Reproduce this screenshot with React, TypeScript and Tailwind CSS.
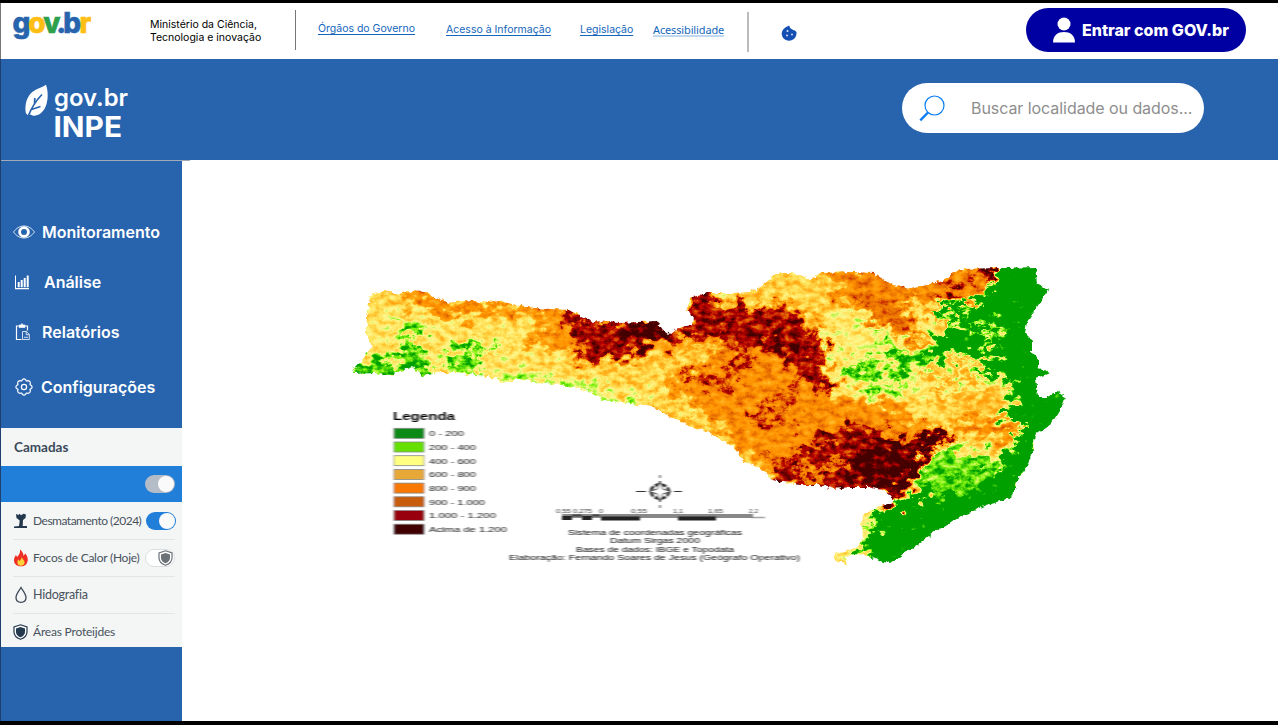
import React from "react";

const OUTLINE =
  "M377 292 L386 291 L397 295 L408 291 L425 292 L437 298 L448 303 L462 301 L482 302 L495 300 L508 303 L520 306 L535 308 L568 310 L580 315 L593 321 L620 323 L657 321 L663 330 L669 334 L675 329 L692 325 L693 318 L687 308 L690 298 L707 293 L730 293 L750 292 L763 285 L777 273 L793 273 L810 280 L820 273 L853 272 L873 273 L893 285 L910 289 L927 285 L947 278 L960 269 L997 268 L1035 267 L1037 283 L1048 290 L1037 307 L1027 322 L1025 333 L1032 340 L1032 352 L1038 358 L1038 368 L1050 373 L1036 378 L1038 397 L1047 397 L1058 392 L1065 397 L1063 405 L1050 425 L1035 435 L1033 450 L1027 467 L1017 480 L1015 490 L1010 498 L987 505 L960 517 L933 533 L907 552 L890 564 L880 561 L870 556 L860 554 L845 557 L847 565 L834 559 L836 553 L855 548 L863 540 L861 527 L862 515 L880 506 L895 502 L888 493 L882 490 L867 487 L850 487 L833 489 L820 485 L800 485 L773 480 L760 468 L743 460 L733 447 L710 433 L687 425 L663 413 L653 407 L630 404 L603 400 L585 390 L562 385 L535 382 L518 379 L502 382 L488 376 L465 374 L442 372 L423 376 L412 367 L388 376 L375 373 L353 374 L355 367 L372 347 L366 335 L367 317 L370 297 Z";

/* Elevation areas: grey level stands for height, later coloured by the palette filter. */
const RELIEF: { d: string; level: string }[] = [
  { level: "#787878", d: "M365 285 L440 290 L580 305 L600 330 L540 330 L500 318 L470 312 L445 316 L425 305 L400 304 L365 300Z" },
  { level: "#acacac", d: "M405 284 L430 286 L450 298 L520 298 L580 306 L600 340 L560 326 L520 312 L470 309 L462 322 L440 314 L424 304 L405 298Z" },
  { level: "#a8a8a8", d: "M520 345 L560 322 L640 340 L640 352 L600 352 L560 350Z" },
  { level: "#303030", d: "M398 312 L407 324 L424 324 L414 338 L418 350 L434 362 L425 370 L392 370 L402 350 Z" },
  { level: "#262626", d: "M345 380 L352 360 L364 350 L376 360 L395 364 L410 358 L434 370 L420 382Z" },
  { level: "#303030", d: "M450 345 L470 350 L490 344 L508 338 L492 352 L474 362 L484 372 L455 380 L440 368Z" },
  { level: "#4a4a4a", d: "M500 374 L530 376 L580 382 L640 402 L640 412 L500 390Z" },
  { level: "#acacac", d: "M690 340 L740 316 L800 300 L840 330 L830 395 L900 405 L945 436 L900 480 L860 500 L780 488 L740 448 L700 408 L665 384 L690 365Z" },
  { level: "#989898", d: "M600 352 L690 345 L690 375 L664 384 L640 380 L600 368Z" },
  { level: "#787878", d: "M580 354 L640 358 L690 352 L735 338 L722 350 L690 368 L665 378 L640 390 L590 380 L550 367Z" },
  { level: "#808080", d: "M640 396 L690 416 L730 440 L780 478 L760 490 L700 440 L640 415Z" },
  { level: "#e6e6e6", d: "M568 306 L590 316 L668 320 L692 322 L680 286 L710 286 L724 300 L745 306 L790 310 L822 334 L824 350 L818 368 L832 388 L812 390 L790 372 L780 354 L750 346 L744 370 L728 368 L732 346 L718 334 L694 342 L670 342 L640 354 L600 362 L568 358 L588 342 L566 334Z" },
  { level: "#ffffff", d: "M616 316 L658 316 L670 338 L650 344 L622 344 L632 332Z" },
  { level: "#f8f8f8", d: "M748 334 L780 340 L820 340 L812 348 L770 346Z" },
  { level: "#e0e0e0", d: "M672 374 L690 370 L725 376 L738 388 L712 390 L700 382Z" },
  { level: "#dcdcdc", d: "M740 408 L790 410 L796 418 L760 422Z M766 396 L800 398 L800 404 L770 404Z" },
  { level: "#787878", d: "M708 285 L780 265 L835 266 L838 312 L826 332 L806 316 L792 302 L750 302 L730 300Z" },
  { level: "#dadada", d: "M765 300 L790 306 L800 318 L776 318Z" },
  { level: "#b4b4b4", d: "M832 262 L960 260 L990 262 L985 300 L958 330 L935 350 L912 345 L885 322 L870 308 L840 306Z" },
  { level: "#c2c2c2", d: "M852 298 L885 296 L920 324 L930 348 L900 338 L872 316Z" },
  { level: "#606060", d: "M824 312 L866 310 L880 322 L910 348 L950 364 L1000 352 L1010 380 L1010 410 L998 430 L950 425 L910 404 L880 400 L840 388 L824 370Z" },
  { level: "#888888", d: "M925 368 L990 352 L1000 360 L960 374 L1014 370 L1004 388 L960 394 L1010 390 L994 416 L960 432 L935 412 L925 390Z" },
  { level: "#484848", d: "M930 374 L975 362 L990 364 L950 378Z M930 392 L1000 378 L1004 382 L950 396Z" },
  { level: "#6a6a6a", d: "M896 304 L932 304 L944 325 L930 345 L912 340 L920 322Z" },
  { level: "#292929", d: "M866 322 L890 342 L908 354 L928 350 L934 366 L912 368 L898 378 L884 372 L900 362 L890 352Z M838 366 L862 363 L884 366 L876 374 L850 374Z" },
  { level: "#303030", d: "M848 376 L870 376 L886 386 L902 380 L912 402 L898 390 L875 392Z" },
  { level: "#e8e8e8", d: "M814 442 L840 428 L878 428 L900 446 L920 452 L908 470 L895 505 L860 495 L800 492 L764 484 L785 464 L766 462 L790 455Z" },
  { level: "#a8a8a8", d: "M790 474 L830 460 L860 456 L838 466 L812 478Z" },
  { level: "#ffffff", d: "M852 456 L886 436 L905 454 L925 458 L910 480 L895 512 L882 490 L862 482 L842 474Z" },
  { level: "#ffffff", d: "M912 438 L928 430 L954 430 L944 448 L925 454 L900 446Z" },
  { level: "#747474", d: "M888 398 L930 400 L1010 425 L1030 430 L1010 470 L920 505 L850 526 L855 510 L900 500 L922 470 L940 452 L962 438 L925 424Z" },
  { level: "#b4b4b4", d: "M952 418 L985 420 L1022 428 L1012 442 L985 436 L958 430Z" },
  { level: "#313131", d: "M918 466 L940 448 L992 450 L994 478 L975 498 L930 496 L916 482Z" },
  { level: "#040404", d: "M985 255 L1060 255 L1085 410 L1040 450 L1020 510 L890 585 L862 552 L864 520 L890 505 L925 494 L960 498 L980 484 L1000 466 L1012 448 L1022 428 L1002 414 L1016 388 L1004 376 L965 372 L1006 358 L985 352 L955 356 L925 358 L938 335 L948 320 L936 300 L978 300 L988 285Z" },
  { level: "#606060", d: "M976 324 L1006 325 L1002 331 L980 330Z M982 336 L1004 338 L998 343 L978 342Z M950 320 L968 316 L966 328 L954 330Z M952 304 L962 304 L958 314Z" },
  { level: "#040404", d: "M1002 404 L1024 404 L1014 420 L1000 418Z" },
  { level: "#ffffff", d: "M980 262 L999 262 L998 279 L982 278Z" },
  { level: "#e8e8e8", d: "M944 288 L958 286 L964 300 L950 300Z M970 276 L981 276 L980 284 L970 282Z M812 376 L832 378 L832 392 L814 392Z M815 334 L824 336 L822 348 L815 348Z" },
  { level: "#606060", d: "M854 514 L874 508 L882 510 L872 516 L884 520 L870 524 L880 530 L868 534 L862 548 L830 568 L826 550 L852 545Z" },
];

const LEGEND = [
  ["#078a14", "0 - 200"],
  ["#66e000", "200 - 400"],
  ["#ffff80", "400 - 600"],
  ["#e8a838", "600 - 800"],
  ["#f87800", "800 - 900"],
  ["#c85c08", "900 - 1.000"],
  ["#980008", "1.000 - 1.200"],
  ["#400004", "Acima de 1.200"],
];

function ReliefMap() {
  return (
    <svg className="block h-[325px] w-[742px]" viewBox="338 250 742 325" fontFamily="'Liberation Sans', sans-serif">
      <defs>
        <filter id="palette" filterUnits="userSpaceOnUse" x="330" y="240" width="760" height="345" colorInterpolationFilters="sRGB">
          <feGaussianBlur in="SourceGraphic" stdDeviation="2.5" result="soft" />
          <feTurbulence type="fractalNoise" baseFrequency="0.075 0.1" numOctaves="4" seed="4" result="warp" />
          <feDisplacementMap in="soft" in2="warp" scale="46" xChannelSelector="R" yChannelSelector="G" result="bent" />
          <feGaussianBlur in="bent" stdDeviation="0.7" result="height" />
          <feTurbulence type="fractalNoise" baseFrequency="0.11 0.16" numOctaves="4" seed="23" />
          <feColorMatrix values="1 0 0 0 0  1 0 0 0 0  1 0 0 0 0  0 0 0 0 1" result="noise" />
          <feComposite in="height" in2="noise" operator="arithmetic" k1="0" k2="1" k3="0.42" k4="-0.21" />
          <feColorMatrix values="1 0 0 0 0  0 1 0 0 0  0 0 1 0 0  0 0 0 0 1" />
          <feComponentTransfer>
            <feFuncR type="table" tableValues="0 0 .5 1 1 1 1 .9 .72 .27" />
            <feFuncG type="table" tableValues=".63 .63 .95 .97 .87 .68 .58 .42 0 0" />
            <feFuncB type="table" tableValues="0 0 .06 .56 .32 .1 0 0 0 0" />
          </feComponentTransfer>
          <feGaussianBlur stdDeviation="0.6" />
        </filter>
        <filter id="coast" filterUnits="userSpaceOnUse" x="330" y="240" width="760" height="345">
          <feTurbulence type="fractalNoise" baseFrequency="0.2" numOctaves="2" seed="7" result="n" />
          <feDisplacementMap in="SourceGraphic" in2="n" scale="6" xChannelSelector="R" yChannelSelector="G" />
          <feGaussianBlur stdDeviation="0.6" />
        </filter>
        <filter id="scan" x="-5%" y="-20%" width="110%" height="140%">
          <feGaussianBlur stdDeviation="0.9 0.45" />
        </filter>
        <mask id="state" maskUnits="userSpaceOnUse" x="330" y="240" width="760" height="345">
          <path d={OUTLINE} fill="#fff" filter="url(#coast)" />
        </mask>
      </defs>
      <g mask="url(#state)">
        <g filter="url(#palette)">
          <rect x="330" y="240" width="760" height="345" fill="#6b6b6b" />
          {RELIEF.map((a, i) => (
            <path key={i} d={a.d} fill={a.level} />
          ))}
        </g>
      </g>

      <g filter="url(#scan)">
        <text x="393" y="419.500" fontSize="10" fontWeight="700" fill="#000" textLength="62" lengthAdjust="spacingAndGlyphs">Legenda</text>
        {LEGEND.map(([color, label], i) => (
          <g key={label}>
            <rect x="394" y={428.3 + i * 13.7} width="30" height="10" fill={color} stroke="#888" strokeWidth="0.8" />
            <text
              x="429"
              y={436.2 + i * 13.7}
              fontSize="8"
              fill="#111"
              textLength={[35, 47, 47, 47, 47, 56, 67, 78][i]}
              lengthAdjust="spacingAndGlyphs"
            >
              {label}
            </text>
          </g>
        ))}
      </g>

      <g filter="url(#scan)" stroke="#333" fill="none">
        <ellipse cx="660" cy="491.500" rx="9" ry="7" strokeWidth="2.800" strokeDasharray="5 1.500" />
        <path d="M636 491.500H646M674 491.500H682M660 475V478M660 481V485M660 498V501M660 505V508" strokeWidth="1.200" />
        <path d="M660 481L662.500 489L671 491.500L662.500 494L660 502L657.500 494L649 491.500L657.500 489Z" fill="#fff" strokeWidth="1" />
      </g>
      <g filter="url(#scan)">
        <path d="M562 516H753" stroke="#888" strokeWidth="4" />
        <path d="M562 518H572M582 518H592M601 518.500H640M678 518.500H716" stroke="#222" strokeWidth="4" />
        <path d="M572 515.500H582M592 515.500H600" stroke="#444" strokeWidth="2" />
        <path d="M752 517.500H765" stroke="#777" strokeWidth="1.500" strokeDasharray="2 1" />
        <g fontSize="6" fill="#333">
          <text x="556" y="513" textLength="36" lengthAdjust="spacingAndGlyphs">0,55 0,275</text>
          <text x="599" y="513" textLength="4" lengthAdjust="spacingAndGlyphs">0</text>
          <text x="631" y="513" textLength="16" lengthAdjust="spacingAndGlyphs">0,55</text>
          <text x="673" y="513" textLength="10" lengthAdjust="spacingAndGlyphs">1,1</text>
          <text x="708" y="513" textLength="15" lengthAdjust="spacingAndGlyphs">1,65</text>
          <text x="749" y="513" textLength="9" lengthAdjust="spacingAndGlyphs">2,2</text>
        </g>
        <g fontSize="8" fill="#000">
          <text x="568" y="534.500" fontSize="6.500" textLength="174" lengthAdjust="spacingAndGlyphs">Sistema de coordenadas geográficas</text>
          <text x="610" y="543" textLength="90" lengthAdjust="spacingAndGlyphs">Datum Sirgas 2000</text>
          <text x="576" y="551.500" textLength="158" lengthAdjust="spacingAndGlyphs">Bases de dados: IBGE e Topodata</text>
          <text x="509" y="559.500" textLength="291" lengthAdjust="spacingAndGlyphs">Elaboração: Fernando Soares de Jesus (Geógrafo Operativo)</text>
        </g>
      </g>
    </svg>
  );
}

function GovLogo() {
  return (
    <svg className="ml-3 h-9 w-20 shrink-0" viewBox="12 6 80 36" fontFamily="Inter, sans-serif" fontWeight="800" fontSize="28">
      <text x="12.500" y="33" strokeWidth="0.6">
        <tspan fill="#2864ae" stroke="#2864ae" letterSpacing="-2.200">g</tspan>
        <tspan fill="#ffbe14" stroke="#ffbe14" letterSpacing="-2.400">o</tspan>
        <tspan fill="#2fa04a" stroke="#2fa04a" letterSpacing="-4.200">v</tspan>
        <tspan fill="#2864ae" stroke="#2864ae" letterSpacing="-2.800">.</tspan>
        <tspan fill="#2864ae" stroke="#2864ae" letterSpacing="-1.600">b</tspan>
        <tspan fill="#ffbe14" stroke="#ffbe14">r</tspan>
      </text>
    </svg>
  );
}

function InpeLogo() {
  return (
    <svg className="ml-6 h-16 w-[108px]" viewBox="24 80 108 64" fill="#fff">
      <path d="M46 84.800C48.300 91 48.600 101 45 108C42.500 113 37.500 116.500 32.500 115.500L30.500 114.500L28 115.500L25.800 113C24.500 104 27 96 33 91.500C37 88.500 42.500 87.500 46 84.800Z" />
      <path d="M28 116.500C31 109 36 100.500 42 94.500M34.500 104.500L34.800 98M31.500 109.500L40.500 106.500" fill="none" stroke="#2864ae" strokeWidth="1.700" />
      <text x="54" y="105.500" fontFamily="Inter, sans-serif" fontWeight="600" fontSize="24" textLength="74" lengthAdjust="spacingAndGlyphs">gov.br</text>
      <text x="53.500" y="137.300" fontFamily="Inter, sans-serif" fontWeight="700" fontSize="28" textLength="68.500" lengthAdjust="spacingAndGlyphs">INPE</text>
    </svg>
  );
}

function EyeIcon() {
  return (
    <svg className="h-4 w-6 shrink-0" viewBox="0 0 24 16" fill="none" stroke="#fff">
      <path d="M1.500 8C4 4.500 7.500 2 12 2C16.500 2 20 4.500 22.500 8C20 11.500 16.500 14 12 14C7.500 14 4 11.500 1.500 8Z" strokeWidth=".8" />
      <circle cx="12" cy="8" r="4.400" strokeWidth="2.800" />
    </svg>
  );
}

function ChartIcon() {
  return (
    <svg className="h-4 w-4 shrink-0" viewBox="0 0 16 16" fill="#fff">
      <path d="M1 1.500H2V14H15V15.300H1Z" />
      <path d="M3.700 8H5.700V13.300H3.700ZM6.700 6H8.700V13.300H6.700ZM9.700 4H11.700V13.300H9.700ZM12.700 1.500H14.700V13.300H12.700Z" />
    </svg>
  );
}

function ReportIcon() {
  return (
    <svg className="h-[18px] w-4 shrink-0" viewBox="0 0 16 18" fill="none" stroke="#fff">
      <path d="M7.500 16.500H2.500V3H4.500M10.500 3H13.500V7.500" strokeWidth="1.200" />
      <path d="M5 4.500V2H7L8 .5L9 2H11V4.500Z" fill="#fff" strokeWidth=".6" />
      <path d="M8.500 8.500H12.500L15.300 11.500V16.500H8.500ZM12.200 8.500V11.700H15.300M10 14.300H14" strokeWidth=".8" />
    </svg>
  );
}

function GearIcon() {
  return (
    <svg className="h-[18px] w-[18px] shrink-0" viewBox="0 0 18 18" fill="none" stroke="#fff" strokeLinejoin="round">
      <path
        d="M7.500 1.500Q9 .4 10.500 1.500L11.300 3L13 2.600Q15.200 2.800 15.400 5L15 6.700L16.500 7.500Q17.600 9 16.500 10.500L15 11.300L15.400 13Q15.200 15.200 13 15.400L11.300 15L10.500 16.500Q9 17.600 7.500 16.500L6.700 15L5 15.400Q2.800 15.200 2.600 13L3 11.300L1.500 10.500Q.4 9 1.500 7.500L3 6.700L2.600 5Q2.800 2.800 5 2.600L6.700 3Z"
        strokeWidth="1.200"
      />
      <circle cx="9" cy="9" r="2.600" strokeWidth="1.200" />
    </svg>
  );
}

function TreeIcon() {
  return (
    <svg className="h-4 w-4 shrink-0" viewBox="0 0 16 16" fill="#24384e">
      <path d="M3 1L5.500 2L6.500.8L8 2.200L10.500.8L13 1.500L12.500 5L10 7L9.700 13H14V15H1V13.500L6 13L6.700 7.500L3.500 5Z" />
    </svg>
  );
}

function FireIcon() {
  return (
    <svg className="h-[18px] w-4 shrink-0" viewBox="0 0 16 18">
      <path d="M7 .5C10 3 10.500 5 10.500 7L12.200 4.500C15.500 8 15.500 12.500 13 15.500C10.500 18 5 18 2.500 15.300C0 12.500 1 8.500 3 6L4 8C6 6 7.500 3.500 7 .5Z" fill="#ee2f24" />
      <path d="M8.500 8C9 10 12 11 11.500 14C11 17.500 5.500 17.500 4.500 14.500C4 12 5 11 5.500 10.500L6.700 12C7.500 11 8.500 10 8.500 8Z" fill="#ffd33a" />
    </svg>
  );
}

function DropIcon() {
  return (
    <svg className="h-[18px] w-4 shrink-0" viewBox="0 0 16 18" fill="none" stroke="#3c4a57" strokeWidth="1.300">
      <path d="M8 1.500C6 5 3 8 3 11.500C3 14.500 5 16.300 8 16.300C11 16.300 13 14.500 13 11.500C13 8 10 5 8 1.500Z" />
    </svg>
  );
}

function ShieldIcon({ tone = "#24384e" }: { tone?: string }) {
  return (
    <svg className="h-4 w-[15px] shrink-0" viewBox="0 0 15 16">
      <path d="M7.500 .8L14 3V8C14 11.500 11 14 7.500 15.300C4 14 1 11.500 1 8V3Z" fill="#fff" stroke={tone} strokeWidth="1.200" />
      <path d="M7.500 3L12 4.500V8C12 10.500 10 12.300 7.500 13.300C5 12.300 3 10.500 3 8V4.500Z" fill={tone} />
    </svg>
  );
}

function SearchIcon() {
  return (
    <svg className="h-[27px] w-[27px] shrink-0" viewBox="0 0 27 27" fill="none" stroke="#0a7df5">
      <circle cx="15.500" cy="10.500" r="9.500" strokeWidth="1.200" />
      <path d="M9 17.500L1.300 25.300" strokeWidth="2.400" />
    </svg>
  );
}

function CookieIcon() {
  return (
    <svg className="h-4 w-4 shrink-0" viewBox="0 0 16 16">
      <path d="M7.200 1C8 .6 8.300 .6 8.400 1C9 2.800 9.500 3.700 10.800 4C11.500 5 12.500 5.300 13.500 5.300C14 6 14.800 6.300 15.500 7C16 12 12.500 15.700 8 15.700C4.500 15.700 1.500 13.500 .8 9.500C.3 6 3 2.500 7.200 1Z" fill="#1450b4" />
      <g fill="#dfe9f8">
        <circle cx="6.500" cy="6" r="1" />
        <circle cx="6" cy="10.500" r=".9" />
        <circle cx="11" cy="9.500" r=".9" />
      </g>
    </svg>
  );
}

function Toggle({ className, children }: { className: string; children?: React.ReactNode }) {
  return <span className={"flex h-[18px] w-[30px] shrink-0 items-center justify-end rounded-full px-px " + className}>{children ?? <span className="h-4 w-4 rounded-full bg-[#fafafa]" />}</span>;
}

export default function App() {
  const link =
    "text-[10.5px] leading-[13px] text-[#1466bc] whitespace-nowrap underline decoration-1 underline-offset-2 [text-decoration-skip-ink:none]";
  return (
    <div className="flex h-[725px] w-[1278px] flex-col overflow-hidden border-t-[3px] border-b-4 border-black bg-white font-['Inter',sans-serif]">
      <div className="flex min-h-0 flex-1 flex-col border-l border-[#1f3f6c]">
        <header className="-ml-px flex h-14 shrink-0 items-start border-l border-[#777] bg-white">
          <div className="-ml-px flex w-[149px] pt-[3px]">
            <GovLogo />
          </div>
          <p className="w-[146px] pt-[15px] pl-px text-[10.5px] leading-[13px] text-black">
            Ministério da Ciência,
            <br />
            Tecnologia e inovação
          </p>
          <div className="mt-[7px] h-10 w-px bg-[#777]" />
          <nav className="flex">
            <a className={link + " mt-[19px] ml-[22px] w-[98px]"}>Órgãos do Governo</a>
            <a className={link + " mt-5 ml-[30px] w-[106px]"}>Acesso à Informação</a>
            <a className={link + " mt-5 ml-[28px] w-[54px]"}>Legislação</a>
            <a className="mt-[21px] ml-[19px] w-[71px] border-b-2 border-[#c2d8ef] font-['Noto_Sans',sans-serif] text-[11px] leading-[11px] tracking-[-0.14px] text-[#1466bc]">Acessibilidade</a>
          </nav>
          <div className="mt-[9px] ml-[23px] h-10 w-0.5 bg-[#bbb]" />
          <div className="mt-[22px] ml-8">
            <CookieIcon />
          </div>
          <button className="mt-[5px] mr-8 ml-auto flex h-11 w-[220px] items-center rounded-full bg-[#0000a2] pl-[27px] text-white">
            <svg className="h-[26px] w-[22px]" viewBox="0 0 22 26" fill="#fff">
              <circle cx="11" cy="7" r="6.500" />
              <path d="M0 25.500C0 18 5 15 11 15C17 15 22 18 22 25.500Z" />
            </svg>
            <span className="ml-[7px] text-base leading-5 font-extrabold whitespace-nowrap">Entrar com GOV.br</span>
          </button>
        </header>

        <div className="flex h-[101px] shrink-0 items-start bg-[#2864ae]">
          <div className="-ml-px pt-[21px]">
            <InpeLogo />
          </div>
          <div className="mt-6 mr-[74px] ml-auto flex h-[50px] w-[302px] items-center rounded-full bg-white pl-[17px]">
            <SearchIcon />
            <span className="ml-[25px] text-base leading-5 tracking-[-0.06px] whitespace-nowrap text-[#8e8e8e]">Buscar localidade ou dados...</span>
          </div>
        </div>

        <div className="flex min-h-0 flex-1">
          <aside className="flex w-[181px] shrink-0 flex-col bg-[#2864ae]">
            <div className="h-px w-[189px] shrink-0 bg-[#a3abbb]" />
            <nav className="flex h-[267px] shrink-0 flex-col pt-[61px] text-base leading-5 font-semibold text-white">
              <a className="flex h-5 items-center pl-[11px]">
                <EyeIcon />
                <span className="ml-1.5">Monitoramento</span>
              </a>
              <a className="mt-[30px] flex h-5 items-center pl-[13px]">
                <ChartIcon />
                <span className="ml-3.5">Análise</span>
              </a>
              <a className="mt-[30px] flex h-5 items-center pl-[13px]">
                <ReportIcon />
                <span className="ml-3">Relatórios</span>
              </a>
              <a className="mt-[35px] flex h-5 items-center pl-3.5">
                <GearIcon />
                <span className="ml-2">Configurações</span>
              </a>
            </nav>
            <section className="flex h-[219px] shrink-0 flex-col bg-[#f4f5f5] font-['Lato','Noto_Sans',sans-serif] text-[12.5px] text-[#48535d]">
              <h2 className="flex h-[38px] items-center pl-[13px] text-[13.5px] font-bold text-[#3a4a5a]">Camadas</h2>
              <div className="flex h-9 items-center justify-end bg-[#217fd9] pr-[7px]">
                <Toggle className="bg-[#b4bcc8]" />
              </div>
              <div className="flex h-[37px] items-center pr-1.5 pl-3">
                <TreeIcon />
                <span className="ml-1 w-0 flex-1 pt-px text-[12px] tracking-[-0.5px] whitespace-nowrap">Desmatamento (2024)</span>
                <Toggle className="bg-[#217fd9]" />
              </div>
              <div className="mr-[7px] ml-3 flex h-[37px] items-center border-t border-[#e2e5e6]">
                <FireIcon />
                <span className="ml-1 flex-1 text-[12px] tracking-[-0.25px] whitespace-nowrap">Focos de Calor (Hoje)</span>
                <Toggle className="border border-[#dcdfe1] bg-white">
                  <ShieldIcon tone="#6b7278" />
                </Toggle>
              </div>
              <div className="mr-[7px] ml-3 flex h-[37px] items-center border-t border-[#e2e5e6]">
                <DropIcon />
                <span className="ml-1 pt-px tracking-[-0.25px]">Hidografia</span>
              </div>
              <div className="mr-[7px] ml-3 flex h-[34px] items-center border-t border-[#e2e5e6] pt-[3px]">
                <ShieldIcon />
                <span className="ml-[5px] text-[12px] tracking-[-0.2px]">Áreas Proteijdes</span>
              </div>
            </section>
          </aside>
          <main className="flex-1 pt-[90px] pl-[156px]">
            <ReliefMap />
          </main>
        </div>
      </div>
    </div>
  );
}
